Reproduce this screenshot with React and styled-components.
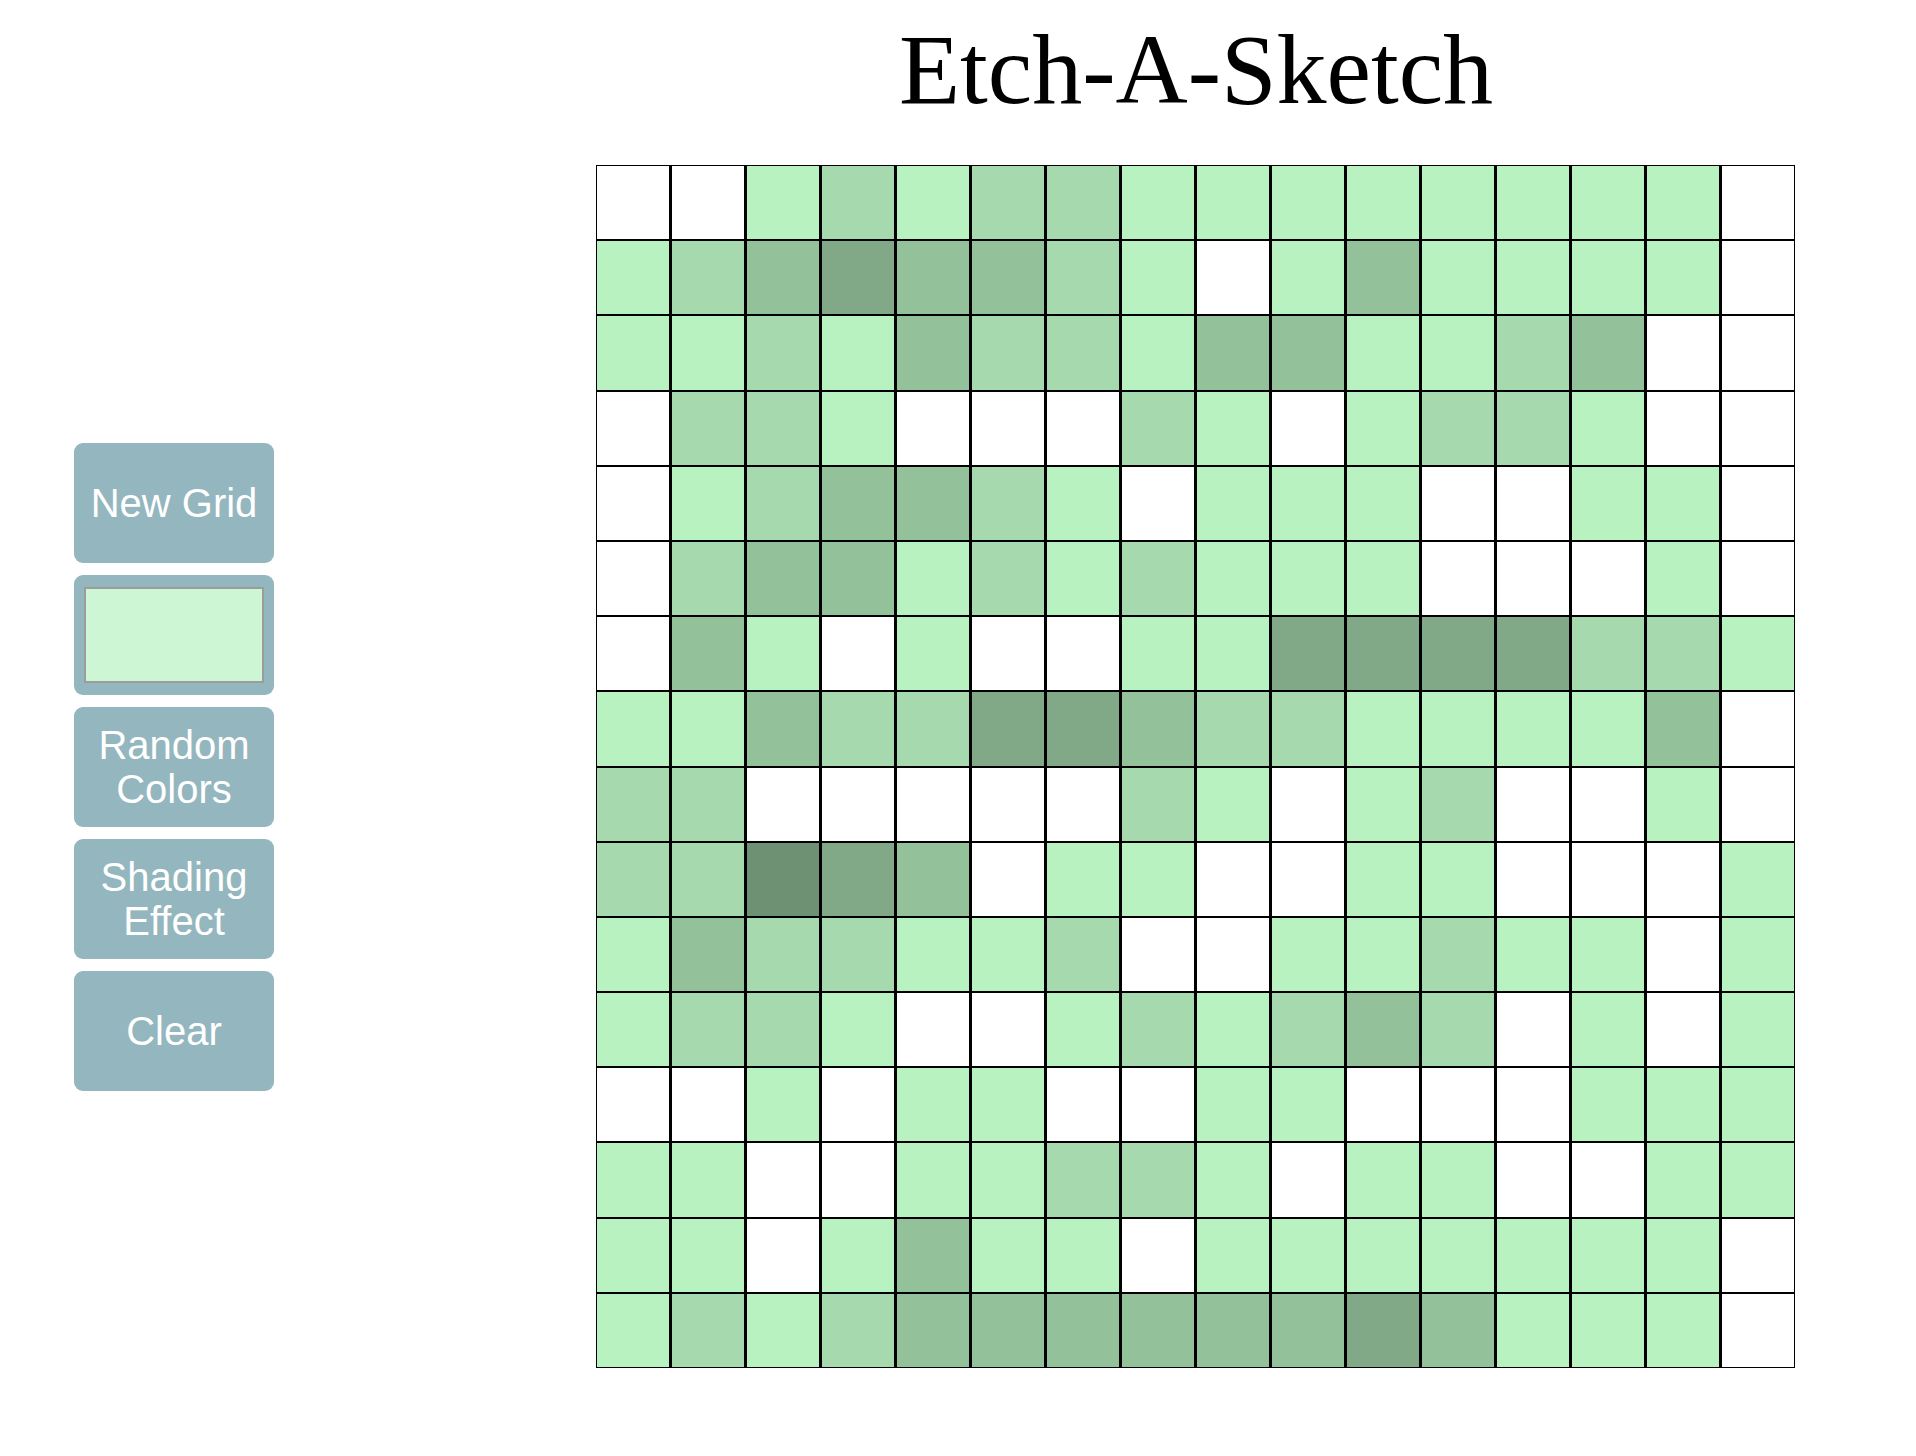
import styled, { createGlobalStyle } from "styled-components";

const GlobalStyle = createGlobalStyle`
  body {
    margin: 0;
    background: #ffffff;
  }
`;

// 0 = white, 1..5 = shading passes over the base green
const SHADES = ["#ffffff", "#b8f2c1", "#a6daae", "#93c29a", "#81a987", "#6e9174"];

const ROWS = [
  "0012122111111110",
  "1234332101311110",
  "1121322133112300",
  "0221000210122100",
  "0123321011100110",
  "0233121211100010",
  "0310100114444221",
  "1132244322111130",
  "2200000210120010",
  "2254301100110001",
  "1322112001121101",
  "1221001212320101",
  "0010110011000111",
  "1100112210110011",
  "1101311011111110",
  "1212333333431110",
];

const Page = styled.div`
  display: grid;
  grid-template-columns: 200px 1200px;
  grid-template-rows: auto auto;
  column-gap: 322px;
  padding-left: 74px;
`;

const Title = styled.h1`
  grid-column: 2;
  grid-row: 1;
  margin: 12px 0 38px;
  text-align: center;
  font-family: "Liberation Serif", "Times New Roman", serif;
  font-size: 100px;
  font-weight: normal;
  color: #000000;
`;

const Sidebar = styled.div`
  grid-column: 1;
  grid-row: 2;
  align-self: center;
  display: flex;
  flex-direction: column;
  gap: 12px;
`;

const ToolButton = styled.button`
  width: 200px;
  height: 120px;
  border: none;
  border-radius: 9px;
  background: #94b6be;
  color: #ffffff;
  font-family: "Liberation Sans", Arial, sans-serif;
  font-size: 40px;
  line-height: 1.1;
  padding: 0 10px;
  cursor: pointer;
`;

const PickerBox = styled.div`
  width: 200px;
  height: 120px;
  box-sizing: border-box;
  border-radius: 9px;
  background: #94b6be;
  padding: 12px 10px;
`;

const ColorInput = styled.input`
  display: block;
  width: 100%;
  height: 100%;
  box-sizing: border-box;
  margin: 0;
  padding: 0;
  border: 2px solid #9c9c9c;
  background: #ccf6d4;
  cursor: pointer;
  -webkit-appearance: none;
  appearance: none;

  &::-webkit-color-swatch-wrapper {
    padding: 0;
  }

  &::-webkit-color-swatch {
    border: none;
  }
`;

const Board = styled.div`
  grid-column: 2;
  grid-row: 2;
  display: grid;
  grid-template-columns: repeat(16, 74px);
  grid-auto-rows: 75.2px;
  column-gap: 1px;
  background: #000000;
  width: 1199px;
`;

const Cell = styled.div`
  box-sizing: border-box;
  border: 1px solid #000000;
  background: ${(p) => SHADES[p.$level]};
`;

function App() {
  return (
    <>
      <GlobalStyle />
      <Page>
        <Title>Etch-A-Sketch</Title>
        <Sidebar>
          <ToolButton type="button">New Grid</ToolButton>
          <PickerBox>
            <ColorInput type="color" defaultValue="#ccf6d4" />
          </PickerBox>
          <ToolButton type="button">Random Colors</ToolButton>
          <ToolButton type="button">Shading Effect</ToolButton>
          <ToolButton type="button">Clear</ToolButton>
        </Sidebar>
        <Board>
          {ROWS.map((row, r) =>
            row.split("").map((ch, c) => <Cell key={`${r}-${c}`} $level={Number(ch)} />)
          )}
        </Board>
      </Page>
    </>
  );
}

export default App;
